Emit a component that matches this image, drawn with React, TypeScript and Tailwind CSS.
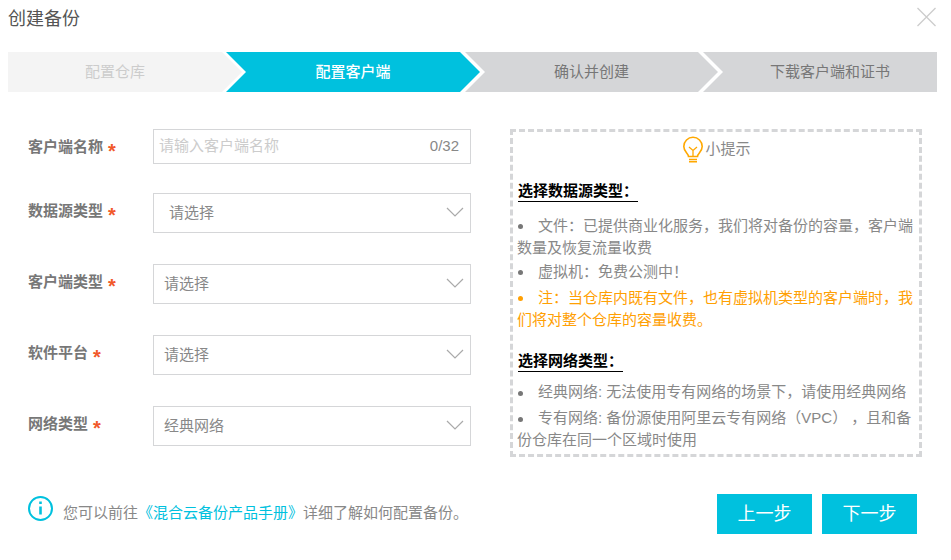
import { ReactNode } from "react";

const font = { fontFamily: '"Liberation Sans", "Noto Sans CJK SC", sans-serif' };

function Label({ text }: { text: string }) {
  return (
    <div className="w-[153px] h-[36px] pl-[28px] shrink-0 font-bold text-[#777] flex items-center gap-[5px]">
      <span className="whitespace-nowrap">{text}</span>
      <span className="text-[#f1592a] text-[20px] leading-[18px] font-bold mt-[7px]">*</span>
    </div>
  );
}

function Chevron() {
  return (
    <svg width="18" height="10" viewBox="0 0 18 10" fill="none" stroke="#aaa" strokeWidth="1.200" className="mb-[3px]">
      <path d="M1 1l8 8 8-8" />
    </svg>
  );
}

function SelectRow({ label, value, indent }: { label: string; value: string; indent?: boolean }) {
  return (
    <div className="flex items-start">
      <Label text={label} />
      <div
        className={
          indent
            ? "w-[318px] h-[40px] border border-[#d5d6d8] flex items-center justify-between pl-[15px] pr-[6px] text-[#888]"
            : "w-[318px] h-[40px] border border-[#d5d6d8] flex items-center justify-between pl-[10px] pr-[6px] text-[#888]"
        }
      >
        <span>{value}</span>
        <Chevron />
      </div>
    </div>
  );
}

function Bullet({ children, orange }: { children: ReactNode; orange?: boolean }) {
  return (
    <p className={orange ? "text-[#ffa003] leading-[22px]" : "text-[#888] leading-[22px]"}>
      <span
        className={
          orange
            ? "inline-block w-[5px] h-[5px] rounded-full bg-[#ffa003] align-middle ml-[1px] mr-[15px]"
            : "inline-block w-[5px] h-[5px] rounded-full bg-[#777] align-middle ml-[1px] mr-[15px]"
        }
      />
      {children}
    </p>
  );
}

function Bulb() {
  return (
    <svg width="24" height="27" viewBox="0 0 24 27" fill="none" stroke="#ffa800" strokeWidth="1.600">
      <path d="M7.500 20.500c0-3-4.700-4.600-4.700-10a9.200 9.200 0 0 1 18.400 0c0 5.400-4.700 7-4.700 10z" />
      <path d="M8 23.500h8M8 25.800h8" />
      <path d="M8 11l4 3.500 4-3.500M12 14.500v6" strokeWidth="1.300" />
    </svg>
  );
}

export default function App() {
  return (
    <div className="w-[951px] h-[560px] bg-white text-[15px] overflow-hidden" style={font}>
      <div className="h-[52px] flex items-start justify-between pl-[8px] pr-[14px]">
        <h1 className="text-[18px] leading-[39px] text-[#555] font-normal">创建备份</h1>
        <svg width="21" height="20" viewBox="0 0 21 20" fill="none" stroke="#ccc" strokeWidth="1.300" className="mt-[7px]">
          <path d="M1.500 1l18 18M19.500 1l-18 18" />
        </svg>
      </div>

      <div className="flex h-[40px] pl-[8px] text-center leading-[40px]">
        <div className="w-[234px] bg-[#f4f4f4] text-[#ccc] pr-[20px] [clip-path:polygon(0_0,214px_0,234px_50%,214px_100%,0_100%)]">
          配置仓库
        </div>
        <div className="w-[254px] -ml-[16px] bg-[#00c1de] text-white font-medium px-[20px] [clip-path:polygon(0_0,234px_0,254px_50%,234px_100%,0_100%,20px_50%)]">
          配置客户端
        </div>
        <div className="w-[253px] -ml-[15px] bg-[#d5d6d8] text-[#777] px-[20px] [clip-path:polygon(0_0,233px_0,253px_50%,233px_100%,0_100%,20px_50%)]">
          确认并创建
        </div>
        <div className="w-[234px] -ml-[15px] bg-[#d5d6d8] text-[#777] pl-[20px] [clip-path:polygon(0_0,100%_0,100%_100%,0_100%,20px_50%)]">
          下载客户端和证书
        </div>
      </div>

      <div className="flex mt-[37px]">
        <div className="w-[510px] shrink-0 flex flex-col gap-[31px]">
          <div className="flex items-start mb-[-3px]">
            <Label text="客户端名称" />
            <div className="w-[318px] h-[35px] border border-[#d5d6d8] flex items-center justify-between pl-[5px] pr-[11px]">
              <span className="text-[#ccc]">请输入客户端名称</span>
              <span className="text-[#888]">0/32</span>
            </div>
          </div>
          <SelectRow label="数据源类型" value="请选择" indent />
          <SelectRow label="客户端类型" value="请选择" />
          <SelectRow label="软件平台" value="请选择" />
          <SelectRow label="网络类型" value="经典网络" />
        </div>

        <div className="w-[412px] h-[328px] border-[3px] border-dashed border-[#d5d6d8] px-[4px]">
          <div className="h-[32px] flex items-center justify-center text-[#888] pt-[3px]">
            <Bulb />
            <span>小提示</span>
          </div>
          <h2 className="inline-block ml-px mt-[16px] border-b border-black text-black font-bold leading-[21px]">
            选择数据源类型：
          </h2>
          <div className="mt-[12px] flex flex-col gap-[2px]">
            <Bullet>文件：已提供商业化服务，我们将对备份的容量，客户端数量及恢复流量收费</Bullet>
            <Bullet>虚拟机：免费公测中！</Bullet>
            <div className="mt-[2px]">
              <Bullet orange>注：当仓库内既有文件，也有虚拟机类型的客户端时，我们将对整个仓库的容量收费。</Bullet>
            </div>
          </div>
          <h2 className="inline-block ml-px mt-[19px] border-b border-black text-black font-bold leading-[21px]">
            选择网络类型：
          </h2>
          <div className="mt-[9px] flex flex-col gap-[4px]">
            <Bullet>经典网络: 无法使用专有网络的场景下，请使用经典网络</Bullet>
            <Bullet>专有网络: 备份源使用阿里云专有网络（VPC）&nbsp;，且和备份仓库在同一个区域时使用</Bullet>
          </div>
        </div>
      </div>

      <div className="flex items-center justify-between mt-[37px] pl-[28px] pr-[34px] h-[40px]">
        <div className="flex items-center gap-[10px] text-[#888]">
          <svg width="25" height="25" viewBox="0 0 25 25" fill="none" stroke="#00c1de" className="-mt-[11px]">
            <circle cx="12.500" cy="12.500" r="11.500" strokeWidth="2" />
            <path d="M12.500 10.500v8" strokeWidth="2.600" />
            <path d="M12.500 5.500v2.500" strokeWidth="2.600" />
          </svg>
          <span className="-mt-[2px]">
            您可以前往<span className="text-[#00c1de]">《混合云备份产品手册》</span>详细了解如何配置备份。
          </span>
        </div>
        <div className="flex gap-[10px]">
          <button className="w-[95px] h-[40px] bg-[#00c1de] text-white text-[18px]">上一步</button>
          <button className="w-[95px] h-[40px] bg-[#00c1de] text-white text-[18px]">下一步</button>
        </div>
      </div>
    </div>
  );
}
